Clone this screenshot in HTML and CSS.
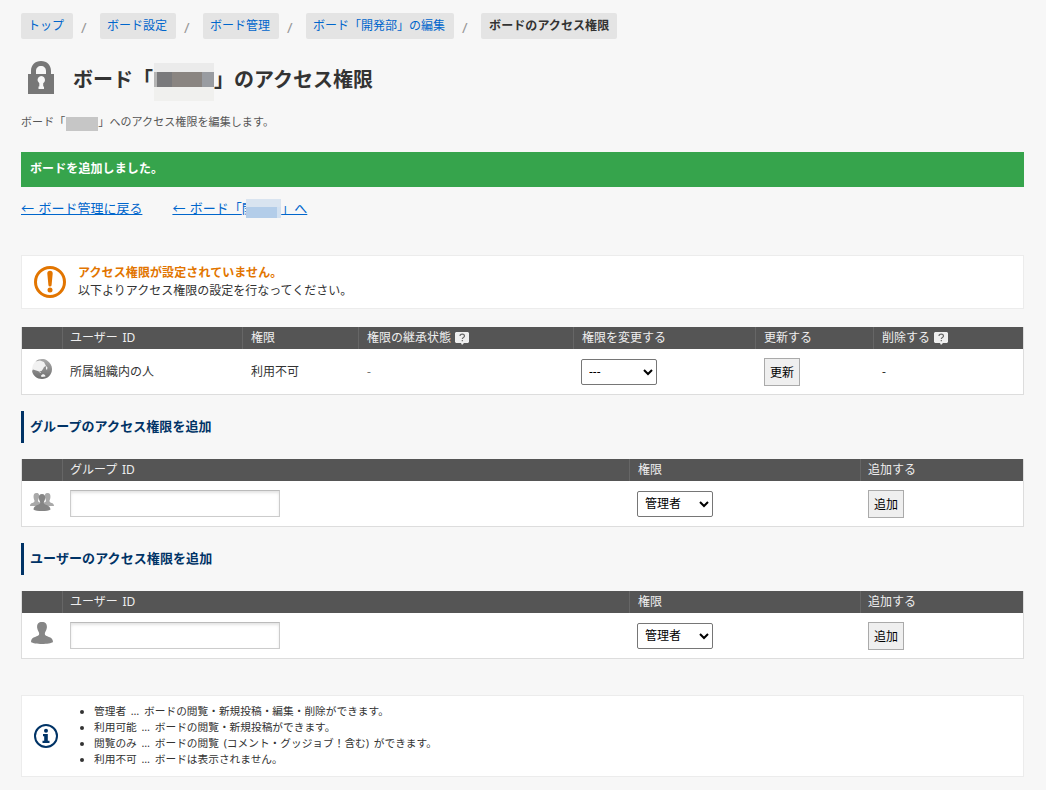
FILE: index.html
```html
<!DOCTYPE html>
<html lang="ja">
<head>
<meta charset="utf-8">
<title>ボードのアクセス権限</title>
<link rel="stylesheet" href="styles.css">
</head>
<body>
<nav class="crumbs">
  <a class="crumb" href="#">トップ</a><span class="slash">/</span>
  <a class="crumb" href="#">ボード設定</a><span class="slash">/</span>
  <a class="crumb" href="#">ボード管理</a><span class="slash">/</span>
  <a class="crumb" href="#">ボード「開発部」の編集</a><span class="slash">/</span>
  <span class="crumb current">ボードのアクセス権限</span>
</nav>

<header class="title">
  <svg class="lock" width="26" height="33" viewBox="0 0 26 33">
    <path d="M3 13V10C3 4 7 0 13 0s10 4 10 10v3h3v20H0V13zM8 13h10v-3c0-3-2-5-5-5s-5 2-5 5z" fill="#777" fill-rule="evenodd"/>
    <path d="M13 15a4 4 0 0 1 2.200 7.300V25.500H16V28h-5.500v-2.500h.8V22.300A4 4 0 0 1 13 15z" fill="#f7f7f7"/>
  </svg>
  <h1>ボード「<span class="mask mask-title"></span>」のアクセス権限</h1>
</header>

<p class="lead">ボード「<span class="mask mask-lead"></span>」へのアクセス権限を編集します。</p>
<p class="success">ボードを追加しました。</p>
<p class="links"><a href="#">← ボード管理に戻る</a><a href="#">← ボード「<span class="mask mask-link">開</span>」へ</a></p>

<section class="notice">
  <svg width="32" height="32" viewBox="0 0 32 32">
    <circle cx="16" cy="16" r="14.500" fill="#fff" stroke="#e27500" stroke-width="3"/>
    <path d="M13.300 7.500a2.700 2.700 0 0 1 5.400 0L17.600 19a1.600 1.600 0 0 1-3.200 0z" fill="#e27500"/>
    <circle cx="16" cy="24" r="2.500" fill="#e27500"/>
  </svg>
  <div><strong>アクセス権限が設定されていません。</strong><br>以下よりアクセス権限の設定を行なってください。</div>
</section>

<table class="grid">
  <colgroup><col class="c-icon"><col class="c-user"><col class="c-role"><col class="c-inherit"><col class="c-change"><col class="c-update"><col></colgroup>
  <thead><tr>
    <th></th><th>ユーザー ID</th><th class="nudge">権限</th>
    <th class="nudge">権限の継承状態 <svg class="help" width="14" height="13" viewBox="0 0 14 13"><path d="M1 0h12l1 1v9l-1 1H9l-2 2-1-2H1l-1-1V1z" fill="#eee"/><path d="M5 4c0-2.700 4.500-2.300 4.500 0C9.500 5.500 7.300 5.300 7.300 7M7.300 8v1.300" fill="none" stroke="#666" stroke-width="1.200"/></svg></th>
    <th class="nudge">権限を変更する</th><th class="nudge">更新する</th>
    <th class="nudge">削除する <svg class="help" width="14" height="13" viewBox="0 0 14 13"><path d="M1 0h12l1 1v9l-1 1H9l-2 2-1-2H1l-1-1V1z" fill="#eee"/><path d="M5 4c0-2.700 4.500-2.300 4.500 0C9.500 5.500 7.300 5.300 7.300 7M7.300 8v1.300" fill="none" stroke="#666" stroke-width="1.200"/></svg></th>
  </tr></thead>
  <tbody><tr>
    <td class="icon"><svg width="20" height="20" viewBox="0 0 20 20">
      <defs><linearGradient id="shade" x1="0" y1="0" x2="0" y2="1"><stop offset="0" stop-color="#aaa"/><stop offset="1" stop-color="#6f6f6f"/></linearGradient></defs>
      <circle cx="10" cy="10" r="10" fill="#f1f1f1"/>
      <path d="M3.500 2.400C7-.6 12-.6 15 1.400c3 2 5 5 5 8.600 0 6-4.500 10-10 10C5 20 .8 16.500.1 12L1 10.500l4 1.300 2 .7 2.500-.5 1.500-2 1-2 2-1-1-2-1-2-4-1.500z" fill="url(#shade)"/>
      <path d="M9 16.500l2-1.500 2 1 .5 1.500-4 .5zM7 12l2 1.500-1 .5zM14 7l1.500 1.500L15 11l-1-1z" fill="#f4f4f4"/>
    </svg></td>
    <td class="text">所属組織内の人</td><td class="text nudge">利用不可</td><td class="text muted nudge">-</td>
    <td><select class="pick"><option>---</option></select></td>
    <td class="nudge"><button class="btn">更新</button></td><td class="text nudge">-</td>
  </tr></tbody>
</table>

<h2>グループのアクセス権限を追加</h2>
<table class="grid">
  <colgroup><col class="c-icon"><col class="c-id"><col class="c-grant"><col></colgroup>
  <thead><tr><th></th><th>グループ ID</th><th class="nudge">権限</th><th>追加する</th></tr></thead>
  <tbody><tr>
    <td class="icon group"><svg width="24" height="18" viewBox="0 0 24 18">
      <path d="M6.500 0C9 0 9.500 2 9 4.500 8.700 6 8 7 8 8c0 1.500 4 1 4 5H0c0-4 4.500-2.500 4.500-5 0-1-.7-1.500-.9-3.500C3.300 2 4 0 6.500 0z" fill="#a9a9a9"/>
      <path d="M17.500 0C15 0 14.500 2 15 4.500c.3 1.500 1 2.500 1 3.500 0 1.500-4 1-4 5h12c0-4-4.500-2.500-4.500-5 0-1 .7-1.500.9-3.500C20.700 2 20 0 17.500 0z" fill="#a9a9a9"/>
      <path d="M12 1c3 0 3.500 2.200 3 5-.3 1.700-1.200 2.500-1.200 4 0 2.500 6.700 1.500 6.700 6.500C18 18.500 6 18.500 3.500 16.500c0-5 6.700-4 6.700-6.500 0-1.500-.9-2.300-1.200-4-.5-2.800 0-5 3-5z" fill="#858585"/>
    </svg></td>
    <td><input class="field" type="text"></td>
    <td><select class="pick"><option>管理者</option></select></td>
    <td><button class="btn">追加</button></td>
  </tr></tbody>
</table>

<h2>ユーザーのアクセス権限を追加</h2>
<table class="grid">
  <colgroup><col class="c-icon"><col class="c-id"><col class="c-grant"><col></colgroup>
  <thead><tr><th></th><th>ユーザー ID</th><th class="nudge">権限</th><th>追加する</th></tr></thead>
  <tbody><tr>
    <td class="icon user"><svg width="22" height="22" viewBox="0 0 22 22">
      <path d="M11 0c4 0 5.300 2.500 4.800 6-.3 2.500-2 4-2 6 0 3.500 8.200 1.500 8.200 8-3 2.600-19 2.600-22 0 0-6.500 8.200-4.500 8.200-8 0-2-1.700-3.500-2-6C5.700 2.500 7 0 11 0z" fill="#868686"/>
    </svg></td>
    <td><input class="field" type="text"></td>
    <td><select class="pick"><option>管理者</option></select></td>
    <td><button class="btn">追加</button></td>
  </tr></tbody>
</table>

<section class="notice info">
  <svg width="24" height="24" viewBox="0 0 24 24">
    <circle cx="12" cy="12" r="11" fill="#fff" stroke="#036" stroke-width="2"/>
    <circle cx="12" cy="6.800" r="2" fill="#036"/>
    <path d="M9 10h4.800v6.800H15.500V19h-7v-2.200h1.700v-4.600H9z" fill="#036"/>
  </svg>
  <ul>
    <li>管理者 … ボードの閲覧・新規投稿・編集・削除ができます。</li>
    <li>利用可能 … ボードの閲覧・新規投稿ができます。</li>
    <li>閲覧のみ … ボードの閲覧 (コメント・グッジョブ！含む) ができます。</li>
    <li>利用不可 … ボードは表示されません。</li>
  </ul>
</section>
</body>
</html>
```

FILE: styles.css
```css
* { box-sizing: border-box; }
body {
  margin: 0;
  padding: 13px 22px 0 21px;
  background: #f7f7f7;
  color: #333;
  font: 12px/18px "Noto Sans", "Noto Sans CJK JP", sans-serif;
}
h1, h2, p, ul { margin: 0; padding: 0; }
a { color: #06c; }

.crumbs { display: flex; height: 26px; }
.crumb {
  padding: 0 9px 0 7px;
  background: #e4e4e4;
  border-radius: 2px;
  line-height: 26px;
  text-decoration: none;
  white-space: nowrap;
}
.current { padding: 0 8px; font-weight: bold; letter-spacing: .08px; }
.slash { width: 27px; padding-left: 8px; color: #999; font-size: 15px; line-height: 28px; }

.title { display: flex; align-items: center; height: 33px; margin-top: 22px; padding-left: 7px; }
.title h1 { height: 38px; margin: 6px 0 0 19px; font-size: 20px; line-height: 36px; }
.lock { flex: none; }
.mask { display: inline-block; }
.mask-title {
  width: 60px;
  height: 38px;
  margin: 1px 0 0 1px;
  vertical-align: top;
  background: linear-gradient(#ebebeb 0 9px, transparent 9px 24px, #f0f0ee 24px), linear-gradient(90deg, #b4b4b4 0 3px, #7a7a7c 3px 18px, #8a8581 18px 48px, #999ca1 48px);
}

.lead { height: 18px; margin-top: 19px; font-size: 11px; line-height: 18px; color: #555; letter-spacing: .08px; }
.mask-lead { width: 32px; height: 14px; margin-left: 1px; vertical-align: -5px; background: #c6c6c6; }
.success {
  height: 35px;
  margin-top: 21px;
  padding-left: 9px;
  background: #36a44c;
  color: #fff;
  font-weight: bold;
  line-height: 34px;
  letter-spacing: .1px;
}
.links { display: flex; gap: 30px; height: 20px; margin-top: 11px; font-size: 13px; line-height: 20px; word-spacing: 1px; }
.mask-link { position: relative; width: 39.500px; height: 20px; overflow: hidden; vertical-align: top; }
.mask-link::after {
  content: "";
  position: absolute;
  inset: 1px 0 0 4px;
  background: linear-gradient(#d9e4f0 0 8px, transparent 8px), linear-gradient(90deg, #b3cde9 0 31px, #d2e1f1 31px);
}

.notice {
  display: flex;
  align-items: center;
  height: 54px;
  margin-top: 37px;
  padding-left: 12px;
  gap: 12px;
  background: #fff;
  border: 1px solid #ececec;
}
.notice strong { color: #e27500; letter-spacing: .1px; }

.grid {
  width: 1003px;
  margin-top: 18px;
  table-layout: fixed;
  border-collapse: separate;
  border-spacing: 0;
  border: 1px solid #ddd;
  border-top: 0;
  background: #fff;
}
.c-icon { width: 40px; }
.c-user { width: 180px; }
.c-role { width: 116px; }
.c-inherit { width: 215px; }
.c-change { width: 182px; }
.c-update { width: 118px; }
.c-id { width: 567px; }
.c-grant { width: 231px; }
.grid th {
  height: 22px;
  padding: 0 0 0 7px;
  background: #555;
  border-left: 1px solid #666;
  color: #eee;
  font-weight: normal;
  line-height: 22px;
  text-align: left;
  word-spacing: 1.500px;
}
.grid th:first-child { border-left-color: #555; }
.help { display: inline-block; margin-left: -1px; vertical-align: -3px; }
.grid td { height: 45px; padding: 9px 0 0 8px; vertical-align: top; line-height: 0; }
.grid .text { padding-top: 14px; line-height: 18px; }
.grid th.nudge { padding-left: 8px; }
.grid td.nudge { padding-left: 9px; }
.grid .muted { color: #777; }
.grid .icon { padding: 10px 0 0 10px; }
.grid .group { padding: 12px 0 0 8px; }
.grid .user { padding: 9px 0 0 9px; }
.pick {
  width: 76px;
  height: 26px;
  margin: 1px 0 0;
  padding: 0 3px 2px;
  background: #fff;
  border: 1px solid #767676;
  border-radius: 2px;
  color: #000;
  font: 12px "Noto Sans", "Noto Sans CJK JP", sans-serif;
}
.btn {
  width: 36px;
  height: 28px;
  padding: 0;
  background: #efefef;
  border: 1px solid #aaa;
  border-radius: 0;
  color: #000;
  font: 12px/26px "Noto Sans CJK JP", sans-serif;
}
.field {
  width: 210px;
  height: 27px;
  background: #fff;
  border: 1px solid #ccc;
  border-top-color: #bbb;
  box-shadow: inset 0 2px 3px #e4e4e4;
}

h2 {
  height: 32px;
  margin-top: 16px;
  padding-left: 6px;
  border-left: 3px solid #036;
  color: #036;
  font-size: 13px;
  line-height: 31px;
  letter-spacing: .08px;
}
h2 + .grid { margin-top: 16px; }

.info { height: 82px; margin-top: 36px; gap: 0; }
.info ul { padding-left: 36px; padding-bottom: 2px; font-size: 10.700px; line-height: 16px; word-spacing: 2px; }
```
